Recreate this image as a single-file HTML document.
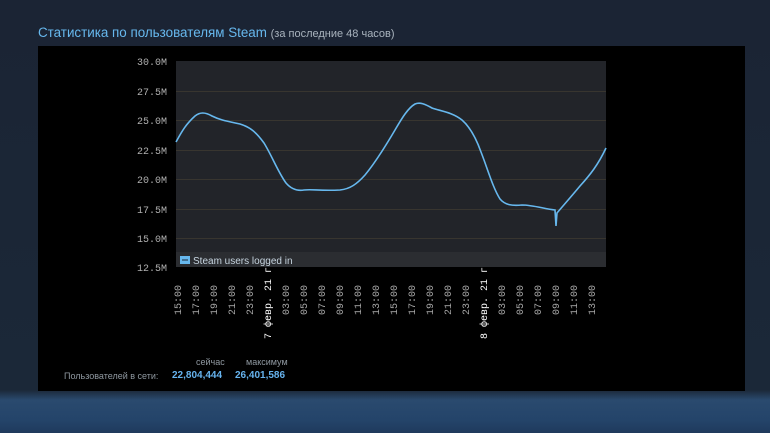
<!DOCTYPE html>
<html><head><meta charset="utf-8"><style>
html,body{margin:0;padding:0;width:770px;height:433px;overflow:hidden;background:#1b2434;font-family:"Liberation Sans","DejaVu Sans",sans-serif}
.bg{position:absolute;left:0;top:0;width:770px;height:433px;background:linear-gradient(#1b2434 0,#1b2838 390px,#2a4a6e 400px,#24446a 420px,#1f3a5c 433px)}
.title{position:absolute;left:38px;top:25px;font-size:13.4px;color:#67b8ee;white-space:nowrap}
.title span{font-size:11px;color:#a9b3bd}
.panel{position:absolute;left:38px;top:46px;width:707px;height:345px;background:#000}
.stat{position:absolute;font-size:9px;color:#8f98a0;white-space:nowrap}
.val{position:absolute;font-size:10px;font-weight:bold;color:#66b3ee}
</style></head><body>
<div class="bg"></div>
<div class="title">Статистика по пользователям Steam <span>(за последние 48 часов)</span></div>
<div class="panel"></div>
<svg width="770" height="433" style="position:absolute;left:0;top:0" font-family="Liberation Mono, DejaVu Sans Mono, monospace">
<g fill="#a8a8a8" font-size="10" text-anchor="middle">
<text transform="translate(181,300) rotate(-90)">15:00</text>
<text transform="translate(199,300) rotate(-90)">17:00</text>
<text transform="translate(217,300) rotate(-90)">19:00</text>
<text transform="translate(235,300) rotate(-90)">21:00</text>
<text transform="translate(253,300) rotate(-90)">23:00</text>
<text transform="translate(271,300) rotate(-90)" fill="#fff">7 февр. 21 г.</text>
<text transform="translate(289,300) rotate(-90)">03:00</text>
<text transform="translate(307,300) rotate(-90)">05:00</text>
<text transform="translate(325,300) rotate(-90)">07:00</text>
<text transform="translate(343,300) rotate(-90)">09:00</text>
<text transform="translate(361,300) rotate(-90)">11:00</text>
<text transform="translate(379,300) rotate(-90)">13:00</text>
<text transform="translate(397,300) rotate(-90)">15:00</text>
<text transform="translate(415,300) rotate(-90)">17:00</text>
<text transform="translate(433,300) rotate(-90)">19:00</text>
<text transform="translate(451,300) rotate(-90)">21:00</text>
<text transform="translate(469,300) rotate(-90)">23:00</text>
<text transform="translate(487,300) rotate(-90)" fill="#fff">8 февр. 21 г.</text>
<text transform="translate(505,300) rotate(-90)">03:00</text>
<text transform="translate(523,300) rotate(-90)">05:00</text>
<text transform="translate(541,300) rotate(-90)">07:00</text>
<text transform="translate(559,300) rotate(-90)">09:00</text>
<text transform="translate(577,300) rotate(-90)">11:00</text>
<text transform="translate(595,300) rotate(-90)">13:00</text>
</g>
<rect x="176" y="61" width="430" height="206" fill="#222429"/>
<g stroke="#38352f" stroke-width="1">
<line x1="176" x2="606" y1="91.5" y2="91.5"/><line x1="176" x2="606" y1="120.5" y2="120.5"/>
<line x1="176" x2="606" y1="150.5" y2="150.5"/><line x1="176" x2="606" y1="179.5" y2="179.5"/>
<line x1="176" x2="606" y1="209.5" y2="209.5"/><line x1="176" x2="606" y1="238.5" y2="238.5"/>
</g>
<g fill="#b0b0b0" font-size="10" text-anchor="end">
<text x="167" y="65">30.0M</text><text x="167" y="95">27.5M</text><text x="167" y="124">25.0M</text>
<text x="167" y="154">22.5M</text><text x="167" y="183">20.0M</text><text x="167" y="213">17.5M</text>
<text x="167" y="242">15.0M</text><text x="167" y="271">12.5M</text>
</g>
<rect x="176" y="252" width="430" height="15" fill="#2b2d31"/>
<rect x="180" y="256" width="10" height="8" fill="#67b8ee"/>
<rect x="182" y="259.5" width="6" height="1" fill="#1b2838"/>
<text x="193" y="264" font-family="Liberation Sans, sans-serif" font-size="10" fill="#c6d4df">Steam users logged in</text>
<path d="M176,142 C181,133 185,125 195,116 C200,112 205,112 212,116 C220,120 226,121 240,124 C250,127 256,132 264,143 C272,156 278,172 286,183 C292,190 298,191 304,190 C312,189 320,191 340,190 C350,189 357,184 365,175 C375,163 385,147 395,130 C402,118 408,108 415,104 C420,102 425,104 432,108 C440,111 452,112 462,120 C470,127 476,138 481,152 C488,170 493,188 500,199 C505,205 512,206 522,205 C533,205 545,209 555,210 L556,226 L557,213 C562,207 570,198 580,186 C590,175 598,165 606,148" fill="none" stroke="#67b8ee" stroke-width="1.6"/>
</svg>
<div class="stat" style="left:196px;top:357px">сейчас</div>
<div class="stat" style="left:246px;top:357px">максимум</div>
<div class="stat" style="left:64px;top:371px">Пользователей в сети:</div>
<div class="val" style="left:172px;top:370px">22,804,444</div>
<div class="val" style="left:235px;top:370px">26,401,586</div>
</body></html>
